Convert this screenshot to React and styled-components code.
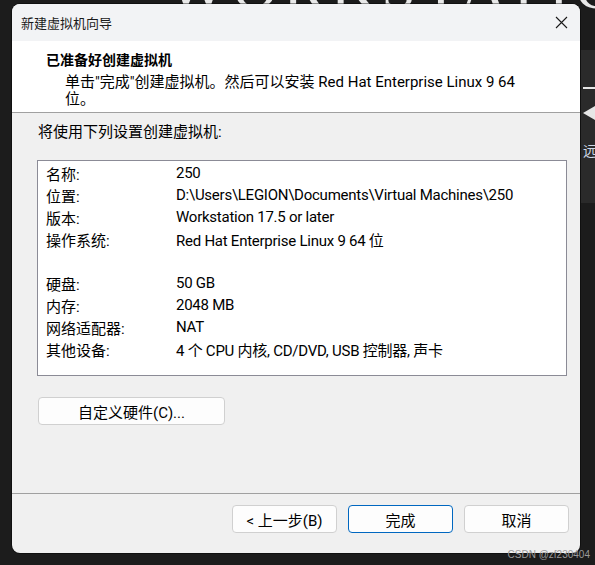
import styled, { createGlobalStyle } from "styled-components";

const GlobalStyle = createGlobalStyle`
  html, body {
    margin: 0;
    padding: 0;
    background: #1c1c1c;
  }
  body {
    font-family: Roboto, "Noto Sans CJK SC", sans-serif;
    font-size: 15px;
    color: #000;
  }
`;

const Desktop = styled.div`
  position: relative;
  width: 595px;
  height: 565px;
  overflow: hidden;
  background: #1c1c1c;
`;

const Banner = styled.div`
  position: absolute;
  top: -48px;
  left: 168px;
  color: #e8e8e8;
  font-family: "Liberation Serif", serif;
  font-size: 62px;
  letter-spacing: 6px;
  white-space: nowrap;
`;

const SidePanel = styled.div`
  position: absolute;
  left: 581px;
  top: 50px;
  width: 14px;
  height: 153px;
  background: #2a2a2a;
  display: flex;
  flex-direction: column;
  align-items: flex-end;
`;

const Dash = styled.div`
  width: 12px;
  height: 2px;
  background: #e6e6e6;
  margin-top: 37px;
`;

const Arrow = styled.svg`
  margin-top: 17px;
  display: block;
`;

const SideText = styled.div`
  margin-top: 22px;
  margin-right: -2px;
  font-family: "Noto Sans CJK SC", sans-serif;
  font-size: 14px;
  line-height: 16px;
  color: #cfd8e6;
`;

const Window = styled.div`
  position: absolute;
  left: 12px;
  top: 4px;
  width: 568px;
  height: 549px;
  border-radius: 8px;
  overflow: hidden;
  display: flex;
  flex-direction: column;
  background: #f0f0f0;
  box-shadow: 0 0 0 1px rgba(0, 0, 0, 0.4);
`;

const TitleBar = styled.div`
  height: 37px;
  flex-shrink: 0;
  background: #f2f3f5;
  display: flex;
  align-items: center;
  justify-content: space-between;
  padding: 0 12px 0 9px;
`;

const Title = styled.span`
  font-family: "Noto Sans CJK SC", sans-serif;
  font-size: 13px;
  color: #1a1a1a;
`;

const Header = styled.div`
  height: 72px;
  flex-shrink: 0;
  background: #fff;
  border-bottom: 1px solid #a0a0a0;
  box-sizing: border-box;
  padding: 8px 0 0 34px;
`;

const Heading = styled.div`
  font-family: "Noto Sans CJK SC", sans-serif;
  font-weight: 700;
  font-size: 14px;
  line-height: 20px;
`;

const SubText = styled.div`
  padding-left: 19px;
  margin-top: 5px;
  line-height: 17px;
`;

const Body = styled.div`
  flex: 1;
  padding: 9px 0 0 25px;
  display: flex;
  flex-direction: column;
  align-items: flex-start;
`;

const Intro = styled.div`
  padding-left: 1px;
  line-height: 20px;
`;

const SummaryBox = styled.div`
  margin-top: 18px;
  width: 530px;
  height: 216px;
  box-sizing: border-box;
  background: #fff;
  border: 1px solid #8b8b96;
  padding: 1px 0 0 8px;
`;

const Row = styled.div`
  display: grid;
  grid-template-columns: 130px 1fr;
  height: 22px;
  align-items: center;
  white-space: nowrap;
`;

const Value = styled.span`
  letter-spacing: -0.25px;
`;

const Spacer = styled.div`
  height: 22px;
`;

const Button = styled.button`
  height: 28px;
  width: ${(p) => p.$w || 105}px;
  background: #fdfdfd;
  border: 1px solid ${(p) => (p.$primary ? "#0067c0" : "#d0d0d0")};
  border-radius: 4px;
  font-family: Roboto, "Noto Sans CJK SC", sans-serif;
  font-size: 15px;
  color: #000;
  padding: 0;
`;

const CustomButton = styled(Button)`
  margin-top: 21px;
  margin-left: 1px;
`;

const Footer = styled.div`
  height: 48px;
  flex-shrink: 0;
  border-top: 1px solid #a0a0a0;
  display: flex;
  justify-content: flex-end;
  align-items: flex-start;
  gap: 11px;
  padding: 11px 11px 0 0;
`;

const Watermark = styled.div`
  position: absolute;
  right: 5px;
  bottom: 5px;
  color: #9a9a9a;
  font-family: "Liberation Sans", sans-serif;
  font-size: 10px;
`;

function CloseIcon() {
  return (
    <svg width="13" height="13" viewBox="0 0 13 13">
      <path d="M1 1 L12 12 M12 1 L1 12" stroke="#1a1a1a" strokeWidth="1.1" />
    </svg>
  );
}

const rows = [
  ["名称:", "250"],
  ["位置:", "D:\\Users\\LEGION\\Documents\\Virtual Machines\\250"],
  ["版本:", "Workstation 17.5 or later"],
  ["操作系统:", "Red Hat Enterprise Linux 9 64 位"],
  null,
  ["硬盘:", "50 GB"],
  ["内存:", "2048 MB"],
  ["网络适配器:", "NAT"],
  ["其他设备:", "4 个 CPU 内核, CD/DVD, USB 控制器, 声卡"],
];

export default function App() {
  return (
    <Desktop>
      <GlobalStyle />
      <Banner>WORKSTATION PRO</Banner>
      <SidePanel>
        <Dash />
        <Arrow width="12" height="14" viewBox="0 0 12 14">
          <path d="M0 7 L12 0 L12 14 Z" fill="#e6e6e6" />
        </Arrow>
        <SideText>远</SideText>
      </SidePanel>
      <Window>
        <TitleBar>
          <Title>新建虚拟机向导</Title>
          <CloseIcon />
        </TitleBar>
        <Header>
          <Heading>已准备好创建虚拟机</Heading>
          <SubText>
            单击"完成"创建虚拟机。然后可以安装 Red Hat Enterprise Linux 9 64
            <br />
            位。
          </SubText>
        </Header>
        <Body>
          <Intro>将使用下列设置创建虚拟机:</Intro>
          <SummaryBox>
            {rows.map((r, i) =>
              r ? (
                <Row key={i}>
                  <span>{r[0]}</span>
                  <Value>{r[1]}</Value>
                </Row>
              ) : (
                <Spacer key={i} />
              )
            )}
          </SummaryBox>
          <CustomButton $w={187}>自定义硬件(C)...</CustomButton>
        </Body>
        <Footer>
          <Button>&lt; 上一步(B)</Button>
          <Button $primary>完成</Button>
          <Button>取消</Button>
        </Footer>
      </Window>
      <Watermark>CSDN @zf230404</Watermark>
    </Desktop>
  );
}
